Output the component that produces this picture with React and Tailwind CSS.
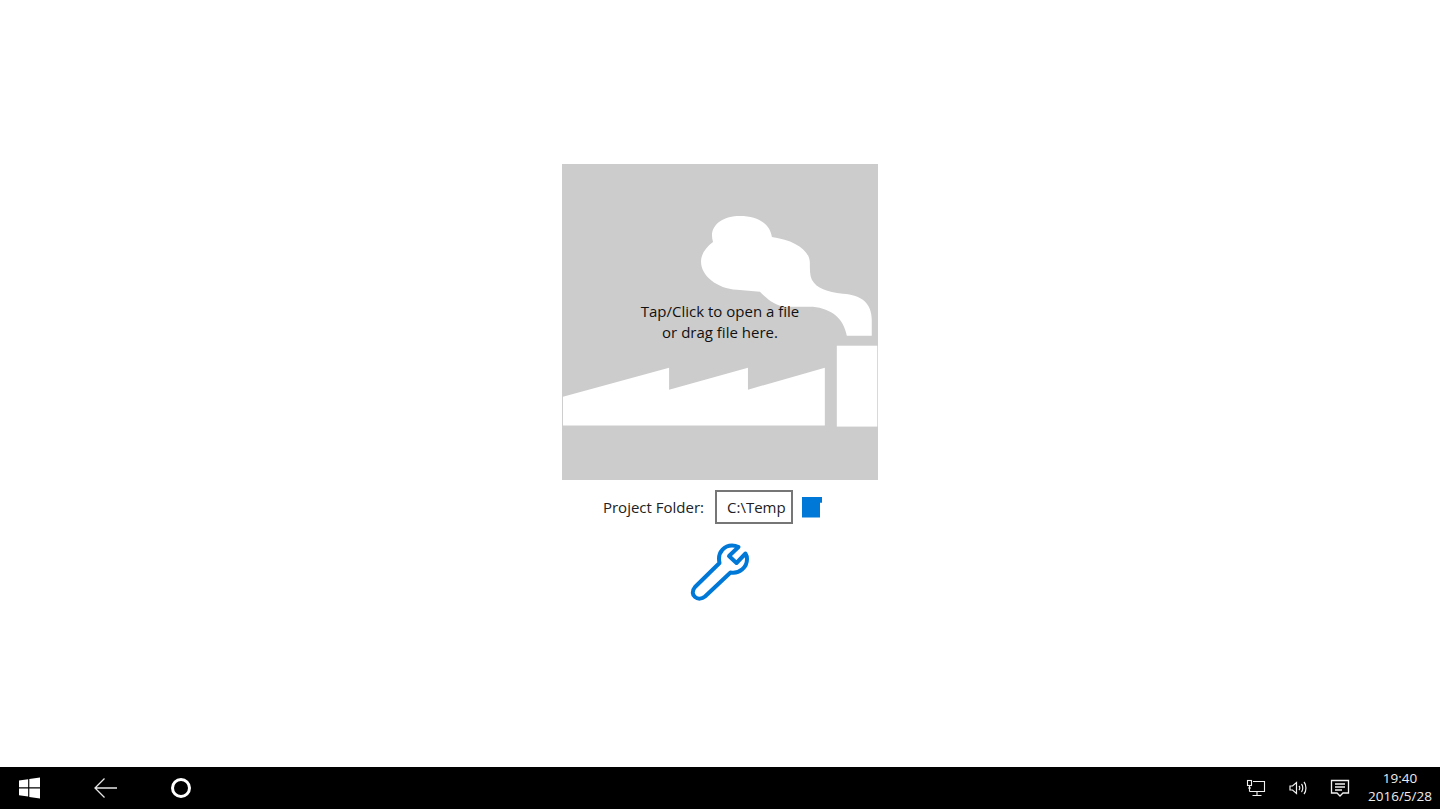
const font = { fontFamily: '"Open Sans", "Noto Sans", sans-serif' };

function Factory() {
  return (
    <svg className="absolute inset-0 w-full h-full" viewBox="0 0 316 316" fill="#fff">
      <path d="M151 78C146 62 160 52 178 52C196 52 208 60 210 73C232 76 248 86 248 99C248 106 248 112 250 116C255 125 265 128 281 130C300 131 310 140 310 156L310 172L285 172C282 155 270 145 251 143L221 143C210 140 204 134 198 128L175 126C155 125 139 112 139 98C139 90 144 83 151 78Z" />
      <path d="M0.7 233L107 204L107 226L186 204L186 226L263 204L263 262L0.7 262Z" />
      <rect x="275" y="182" width="40.5" height="81" />
    </svg>
  );
}

function Wrench() {
  return (
    <svg width="60" height="60" viewBox="0 0 60 60" fill="none" stroke="#0078d7" strokeWidth="4" strokeLinejoin="round" strokeLinecap="round">
      <path d="M29.5 21L5 45C1.5 49 2.5 53 5 55C8 57.5 12 57 15 54.5L40.5 30.5C50 32 57 25 57 17C57 15 56.5 13 55.5 11.5L46.5 21L39 14L48.5 5C46.5 4 44 3.5 42 3.5C34 3.5 29 10 29 16.5C29 18 29.2 19.5 29.5 21Z" />
    </svg>
  );
}

function WinLogo() {
  return (
    <svg width="21" height="22" viewBox="0 0 22 22" fill="#fff">
      <path d="M0 3.2L9.6 1.9V10.2H0ZM10.8 1.7L22 0V10.2H10.8ZM0 11.5H9.6V20L0 18.7ZM10.8 11.5H22V22L10.8 20.3Z" />
    </svg>
  );
}

function Tray() {
  return (
    <div className="flex items-center text-[#f0f0f0]">
      <svg width="20" height="20" viewBox="0 0 20 20" fill="none" stroke="currentColor" strokeWidth="1.1">
        <path d="M7 3.5H18.5V13.5H3.5" />
        <path d="M11 13.5V17M6.5 17.5H15.5" />
        <rect x="1.5" y="2.5" width="4" height="5" />
        <path d="M3.5 7.5V13.5M2 10H5" />
      </svg>
      <svg className="ml-[22px]" width="20" height="20" viewBox="0 0 20 20" fill="none" stroke="currentColor" strokeWidth="1.2">
        <path d="M2 8V12H4.5L8.5 15.5V4.5L4.5 8Z" />
        <path d="M11 8C12 9 12 11 11 12M13.5 6C15.2 8 15.2 12 13.5 14M16 4C18.6 7 18.6 13 16 16" />
      </svg>
      <svg className="ml-[22px]" width="20" height="20" viewBox="0 0 20 20" fill="none" stroke="currentColor" strokeWidth="1.3">
        <path d="M1.5 2.5H18.5V15H13L10 18L7 15H1.5Z" />
        <path d="M5 6H15M5 9H15M5 12H12" />
      </svg>
    </div>
  );
}

export default function App() {
  return (
    <div className="w-[1440px] h-[810px] bg-white flex flex-col overflow-hidden" style={font}>
      <main className="flex-1 flex flex-col items-center pt-[164px]">
        <div className="relative w-[316px] h-[315.5px] bg-[#cccccc] flex items-center justify-center cursor-pointer">
          <Factory />
          <p className="relative text-center text-[15px] leading-[21px] text-[#111]">
            Tap/Click to open a file
            <br />
            or drag file here.
          </p>
        </div>
        <div className="flex items-center mt-[10.5px] h-[34px] text-[15px] text-[#222] mr-[15px]">
          <span>Project Folder:</span>
          <div className="ml-[11px] w-[78px] h-[34px] border-2 border-[#767676] pl-[10px] flex items-center">C:\Temp</div>
          <div className="ml-[9px] w-[20px] h-[21px] bg-[#0078d7] [clip-path:polygon(0_0,100%_0,100%_30%,90%_30%,90%_100%,0_100%)]" />
        </div>
        <div className="mt-[18px] h-[60px] cursor-pointer">
          <Wrench />
        </div>
      </main>
      <footer className="h-[42px] mb-px bg-black flex items-center justify-between text-white">
        <div className="flex items-center">
          <div className="ml-[19px]"><WinLogo /></div>
          <svg className="ml-[54px]" width="24" height="22" viewBox="0 0 24 22" fill="none" stroke="#e6e6e6" strokeWidth="1.3">
            <path d="M1 11H23M10.5 1.5L1 11L10.5 20.5" />
          </svg>
          <svg className="ml-[52px]" width="22" height="22" viewBox="0 0 22 22" fill="none" stroke="#fff" strokeWidth="3">
            <circle cx="11" cy="11" r="8.5" />
          </svg>
        </div>
        <div className="flex items-center">
          <Tray />
          <div className="ml-[17px] mr-[7px] w-[66px] text-center text-[13.5px] leading-[18px] text-[#eee] -translate-y-px">
            <div>19:40</div>
            <div>2016/5/28</div>
          </div>
        </div>
      </footer>
    </div>
  );
}
